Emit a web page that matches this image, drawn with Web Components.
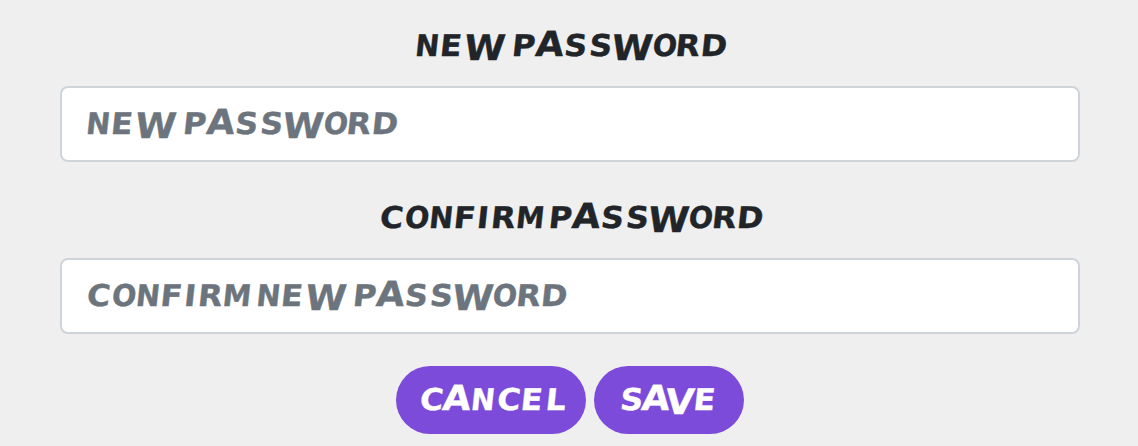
<!DOCTYPE html>
<html lang="en">
<head>
<meta charset="utf-8">
<title>Password</title>
<style>
  html, body { height: 100%; }
  body { margin: 0; background: #efefef; color: #212529; font-family: "DejaVu Sans", sans-serif; overflow: hidden; }
</style>
</head>
<body>
<password-form></password-form>
<script>
  /* Wide slanted lettering. "stops" holds the left edge of each letter, in px. */
  const BEARING = { N: 1.8, E: 2.2, P: 2.2, R: 2.2, D: 2.2, F: 2.2, I: 2.2, M: 2.2, L: 2.2, S: 0.8, O: 0.9, C: 1.1, A: 0.1, W: 3.2, V: 2.6, ' ': 0 };
  const SHAPE = { W: ['w', 3.5], A: ['a', 0], V: ['v', 3.5], O: ['n', 0], N: ['n', 0], M: ['n', 0] };
  const STRETCH = 1.06;

  class DisplayText extends HTMLElement {
    connectedCallback() {
      const text = this.getAttribute('text');
      const width = this.getAttribute('width');
      const stops = this.getAttribute('stops').split(' ').map(Number);
      const letters = [...text];
      const xs = letters.map((c, i) => ((stops[i] - BEARING[c]) / STRETCH).toFixed(2)).join(' ');
      const ys = letters.map(c => SHAPE[c] ? SHAPE[c][1] : 0).join(' ');
      const marked = letters.map(c => SHAPE[c] ? `<tspan class="${SHAPE[c][0]}">${c}</tspan>` : c).join('');
      this.attachShadow({ mode: 'open' }).innerHTML = `
        <style>
          :host { display: block; width: ${width}px; height: 32px; }
          svg { display: block; overflow: visible; }
          text { font: bold 30px "DejaVu Sans", sans-serif; fill: currentColor; stroke: currentColor; stroke-width: .35px; font-kerning: none; }
          .w { font-size: 35px; }
          .a { font-size: 34.5px; }
          .v { font-size: 35px; }
          .n { font-family: "DejaVu Sans Condensed", "DejaVu Sans", sans-serif; font-stretch: semi-condensed; }
        </style>
        <svg width="${width}" height="32"><text transform="translate(0 27) skewX(-6) scale(${STRETCH} 1)" x="${xs}" y="${ys}">${marked}</text></svg>`;
    }
  }

  class FormField extends HTMLElement {
    connectedCallback() {
      this.attachShadow({ mode: 'open' }).innerHTML = `
        <style>
          :host { display: block; }
          .label { display: flex; justify-content: center; height: 57px; }
          .box { box-sizing: border-box; height: 76px; padding: 19px 0 0 25px; border: 2px solid #ced4da; border-radius: 8px; background: #fff; color: #6c757d; }
        </style>
        <div class="label"><slot name="label"></slot></div>
        <div class="box"><slot name="placeholder"></slot></div>`;
    }
  }

  class PillButton extends HTMLElement {
    connectedCallback() {
      this.attachShadow({ mode: 'open' }).innerHTML = `
        <style>
          :host { display: block; }
          button { display: block; height: 68px; border: 0; border-radius: 34px; padding: 0 24px 2px; margin: 0; background: #7c4bd9; color: #fff; }
        </style>
        <button type="button"><slot></slot></button>`;
    }
  }

  class PasswordForm extends HTMLElement {
    connectedCallback() {
      this.attachShadow({ mode: 'open' }).innerHTML = `
        <style>
          :host { display: flex; flex-direction: column; gap: 39px; box-sizing: border-box; padding: 29px 58px 0 60px; }
          .actions { display: flex; justify-content: center; gap: 8px; margin-top: -7px; }
        </style>
        <form-field>
          <display-text slot="label" width="308" text="NEW PASSWORD" stops="0 25.3 50.7 88 97.3 118.7 148 173 198 236.7 260.7 286"></display-text>
          <display-text slot="placeholder" width="310" text="NEW PASSWORD" stops="0 25.3 50.7 88 97.3 118.7 148 173 198 236.7 260.7 286"></display-text>
        </form-field>
        <form-field>
          <display-text slot="label" width="380" text="CONFIRM PASSWORD" stops="0 25 50 75 98.3 112.3 137.3 163 170 191 220.7 245.7 270.7 308.7 333.3 358.3"></display-text>
          <display-text slot="placeholder" width="480" text="CONFIRM NEW PASSWORD" stops="0 25 49.8 74.8 98.5 112.3 137 163 170.3 195.3 220.7 258 267.3 288.3 317.8 342.7 367.7 405.7 430.5 455.3"></display-text>
        </form-field>
        <div class="actions">
          <pill-button><display-text width="142" text="CANCEL" stops="0 21.7 51.7 77.3 102 127"></display-text></pill-button>
          <pill-button><display-text width="102" text="SAVE" stops="2 22.7 49.3 76.7"></display-text></pill-button>
        </div>`;
    }
  }

  customElements.define('display-text', DisplayText);
  customElements.define('form-field', FormField);
  customElements.define('pill-button', PillButton);
  customElements.define('password-form', PasswordForm);
</script>
</body>
</html>
